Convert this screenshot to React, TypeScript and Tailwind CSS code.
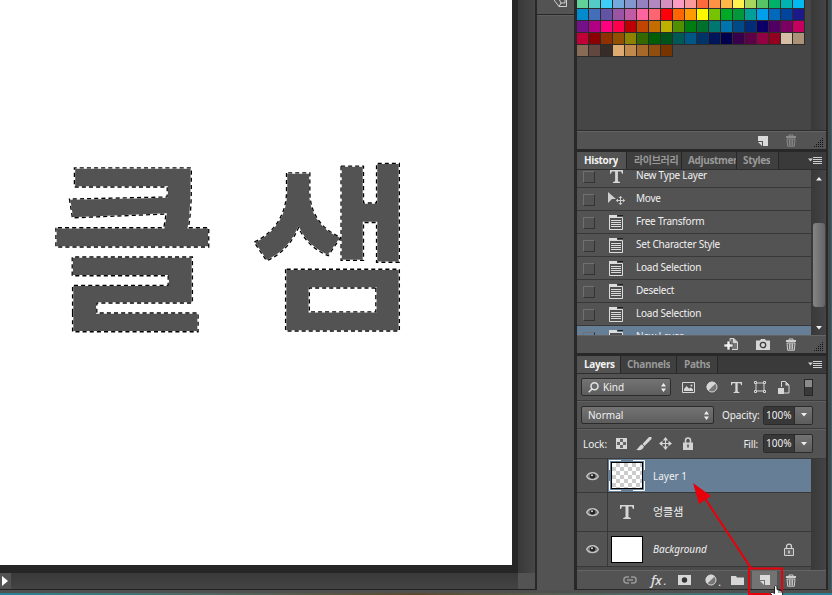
import type { ReactNode } from "react";

const SWATCHES: string[][] = [
  ["#63cf99", "#55cbc7", "#3dcdf5", "#73a9dd", "#8496cf", "#9481c0", "#b388c1", "#d38fbe", "#fc9bc4", "#fb9a9d", "#ff6a3d", "#ff9245", "#ffb648", "#fff24e", "#a8d65c", "#57c364", "#00b268", "#00b3b1", "#00baf1"],
  ["#008bcf", "#436fba", "#6353a5", "#9955a4", "#c25ba5", "#ff649f", "#ff6571", "#ff0008", "#ff6500", "#ff9b00", "#fff900", "#77c300", "#00aa28", "#00983b", "#009f98", "#009fec", "#0069bb", "#00449d", "#1c1a8b"],
  ["#731189", "#b00084", "#ff0081", "#ff004c", "#bd0005", "#c14500", "#c36d00", "#beb000", "#4f8f00", "#007d10", "#00712b", "#007671", "#0075ad", "#004a88", "#002c78", "#0b0068", "#500065", "#7b0061", "#c5005f"],
  ["#c00037", "#8b0000", "#903000", "#925000", "#8e8300", "#346900", "#005f06", "#00541a", "#005954", "#005785", "#003368", "#00165a", "#00004d", "#38004b", "#5c0048", "#930044", "#930020", "#d7bfa5", "#ac9278"],
  ["#876b57", "#624740", "#382c29", "#dfab70", "#c1894c", "#a7692a", "#8f4e10", "#763500"],
];

function NewPageIcon() {
  return (
    <svg width="12" height="12" viewBox="0 0 12 12">
      <path d="M1 1H11V11H6V6H1Z" fill="#dadada" />
      <path d="M1 7H5V11Z" fill="#dadada" />
    </svg>
  );
}

function TrashIcon({ color = "#cfcfcf" }: { color?: string }) {
  return (
    <svg width="12" height="13" viewBox="0 0 12 13" fill="none" stroke={color}>
      <path d="M4 2V1H8V2M1 3.500H11M1 2.500H11" />
      <path d="M2 5H10L9.300 12.200H2.700ZM4.400 5.500V11.500M6 5.500V11.500M7.600 5.500V11.500" />
    </svg>
  );
}

function Grip() {
  const dots: ReactNode[] = [];
  for (let r = 0; r < 5; r++) for (let c = 4 - r; c < 5; c++) dots.push(<rect key={`${r}-${c}`} x={c * 2} y={r * 2} width="1" height="1" fill="#111" />);
  return <svg width="10" height="10">{dots}</svg>;
}

function MenuIcon() {
  return (
    <svg width="14" height="9" viewBox="0 0 14 9">
      <path d="M0 2.500H5L2.500 5.500Z" fill="#cfcfcf" />
      <path d="M5 1.500H14M5 3.500H14M5 5.500H14M5 7.500H14" stroke="#cfcfcf" />
    </svg>
  );
}

function StateIcon() {
  return (
    <svg width="16" height="16" viewBox="0 0 16 16">
      <path d="M1 1H9V4H1Z" fill="#dcdcdc" />
      <path d="M9.500 1.500H15" stroke="#1f1f1f" />
      <path d="M1.500 3.500H14.500V15.500H1.500Z" fill="#505050" stroke="#dcdcdc" />
      <path d="M3 6.500H13M3 8.500H13M3 10.500H13M3 12.500H13" stroke="#dcdcdc" />
    </svg>
  );
}

function MoveIcon() {
  return (
    <svg width="18" height="16" viewBox="0 0 18 16">
      <path d="M1 1L9 8H5L1 12Z" fill="#cfcfcf" />
      <path d="M13.500 5.500V13.500M9.500 9.500H17.500" stroke="#cfcfcf" />
      <path d="M11.500 7L13.500 5L15.500 7ZM11.500 12L13.500 14L15.500 12ZM11 7.500L9 9.500L11 11.500ZM16 7.500L18 9.500L16 11.500Z" fill="#cfcfcf" />
    </svg>
  );
}

function TypeIcon({ size }: { size: number }) {
  return (
    <svg width={size} height={size} viewBox="0 0 14 14">
      <path d="M0 0H14V4H13L12 1.600H8.500V12L10.800 13V14H3.200V13L5.500 12V1.600H2L1 4H0Z" fill="#d6d6d6" />
    </svg>
  );
}

function HalfCircle() {
  return (
    <svg width="12" height="12" viewBox="0 0 12 12">
      <circle cx="6" cy="6" r="5" fill="#777" stroke="#d6d6d6" />
      <path d="M2.200 9.800A5.300 5.300 0 0 1 9.800 2.200Z" fill="#d6d6d6" />
    </svg>
  );
}

function UpDown() {
  return (
    <svg width="5" height="9" viewBox="0 0 5 9">
      <path d="M0 3.500L2.500 0L5 3.500ZM0 5.500L2.500 9L5 5.500Z" fill="#eee" />
    </svg>
  );
}

function Eye() {
  return (
    <svg width="13" height="10" viewBox="0 0 13 10">
      <path d="M.7 5.300C3 .5 10 .5 12.300 5.300C10 9.500 3 9.500 .7 5.300Z" fill="#707070" stroke="#c4c4c4" strokeWidth="1.400" />
      <circle cx="6.500" cy="5" r="2.600" fill="#222" />
      <circle cx="6" cy="4.300" r="1" fill="#ddd" />
    </svg>
  );
}

function Lock() {
  return (
    <svg width="10" height="13" viewBox="0 0 10 13">
      <path d="M2.500 6V3.500C2.500 .3 7.500 .3 7.500 3.500V6" fill="none" stroke="#d2d2d2" strokeWidth="1.500" />
      <path d="M0 5.500H10V13H0Z" fill="#d2d2d2" />
      <path d="M4.300 7.500H5.700V10.500H4.300Z" fill="#444" />
    </svg>
  );
}

function OutlineLock() {
  return (
    <svg width="10" height="13" viewBox="0 0 10 13" fill="none" stroke="#d2d2d2">
      <path d="M2.500 6V3.500C2.500 .3 7.500 .3 7.500 3.500V6" strokeWidth="1.300" />
      <path d="M.5 5.500H9.500V12.500H.5Z" fill="#666" />
      <path d="M5 7.500V10.500" strokeWidth="1.600" />
    </svg>
  );
}

function Checker({ w, h, s, a, b }: { w: number; h: number; s: number; a: string; b: string }) {
  const cells: ReactNode[] = [];
  for (let y = 0; y * s < h; y++) for (let x = 0; x * s < w; x++) if ((x + y) % 2 === 1) cells.push(<rect key={`${x}-${y}`} x={x * s} y={y * s} width={s} height={s} fill={b} />);
  return (
    <svg width={w} height={h}>
      <rect width={w} height={h} fill={a} />
      {cells}
    </svg>
  );
}

function Tab({ label, active, width, pad = "pl-[7px]" }: { label: string; active?: boolean; width: string; pad?: string }) {
  return (
    <div className={`${width} ${pad} flex h-full shrink-0 border-r border-[#282828] ${active ? "bg-[#535353] text-[#f2f2f2]" : "bg-[#3f3f3f] text-[#999]"}`}>
      <span className="min-w-0 overflow-hidden font-['Open_Sans','Noto_Sans_CJK_KR',sans-serif] leading-[16px] font-bold tracking-[-0.35px] whitespace-nowrap">{label}</span>
    </div>
  );
}

function TabBar({ children }: { children: ReactNode }) {
  return (
    <div className="flex h-[18px] items-center border-b border-[#2d2d2d] bg-[#3a3a3a]">
      {children}
      <div className="mr-1 ml-auto"><MenuIcon /></div>
    </div>
  );
}

function HistoryRow({ label, icon }: { label: string; icon: ReactNode }) {
  return (
    <div className="flex h-[23px] shrink-0 items-center border-b border-[#383838] pl-[6px]">
      <div className="mt-[2px] h-3 w-3 border border-[#707070] border-r-[#333] border-b-[#333]" />
      <div className="ml-[9px] flex w-[24px] justify-center">{icon}</div>
      <span className="-mt-[2px] ml-[8px] tracking-[-0.22px]">{label}</span>
    </div>
  );
}

function Percent() {
  return (
    <div className="flex h-[19px] w-[50px] overflow-hidden rounded-[2px] border border-[#2b2b2b]">
      <div className="w-[30px] bg-[#383838] pl-[2px] leading-[17px]">100%</div>
      <div className="flex flex-1 items-center justify-center border-l border-[#2b2b2b] bg-linear-to-b from-[#737373] to-[#5d5d5d]">
        <svg width="6" height="4"><path d="M0 0H6L3 3.500Z" fill="#eee" /></svg>
      </div>
    </div>
  );
}

function Select({ width, children }: { width: string; children: ReactNode }) {
  return (
    <div className={`${width} flex h-[18px] items-center rounded-[2px] border border-[#2b2b2b] bg-linear-to-b from-[#747474] to-[#5d5d5d] pr-[4px] pl-[6px]`}>
      {children}
      <div className="ml-auto"><UpDown /></div>
    </div>
  );
}

function LayerRow({ height, selected, thumb, children, lock }: { height: string; selected?: boolean; thumb: ReactNode; children: ReactNode; lock?: boolean }) {
  return (
    <div className={`${height} flex shrink-0 border-b border-[#383838]`}>
      <div className="flex w-[31px] items-center justify-center border-r border-[#383838]"><Eye /></div>
      <div className={`flex flex-1 items-center ${selected ? "bg-[#667f96]" : ""}`}>
        <div className="flex w-[38px] justify-center">{thumb}</div>
        <span className="ml-[7px]">{children}</span>
        {lock && <div className="mr-[17px] ml-auto"><OutlineLock /></div>}
      </div>
    </div>
  );
}

function SelectedLetter({ children, transform }: { children: string; transform: string }) {
  return (
    <g transform={transform} fontFamily="'Noto Sans CJK KR', sans-serif" fontSize="180" fontWeight="700">
      <text fill="#535353" stroke="#fff" strokeWidth="1.400">{children}</text>
      <text fill="none" stroke="#000" strokeWidth="1.300" strokeDasharray="4 3">{children}</text>
    </g>
  );
}

function Workspace() {
  return (
    <div className="flex w-[535px] flex-col">
      <div className="flex h-[573px]">
        <div className="h-full w-[518px] border-r-[6px] border-b-[8px] border-[#262626] bg-white">
          <svg width="512" height="565">
            <SelectedLetter transform="translate(48 316.5) scale(1.02 1.031)">클</SelectedLetter>
            <SelectedLetter transform="translate(249 315.8) scale(1.007 1.012)">샘</SelectedLetter>
          </svg>
        </div>
        <div className="flex-1 bg-linear-to-r from-[#393939] to-[#474747]" />
      </div>
      <div className="flex h-4 items-center bg-linear-to-b from-[#393939] to-[#444]">
        <div className="flex h-full w-[11px] items-center bg-[#535353] pl-[2px]">
          <svg width="6" height="10"><path d="M0 0L6 5L0 10Z" fill="#fff" /></svg>
        </div>
        <div className="ml-auto h-full w-[17px] bg-[#535353]" />
      </div>
      <div className="h-[1px] bg-[#222]" />
    </div>
  );
}

function SwatchPanel() {
  return (
    <>
      <div className="flex h-[131px] border-b border-[#2d2d2d]">
        <div className="w-[234px] bg-[#464646]">
          {SWATCHES.map((row, i) => (
            <div key={i} className={`flex ${i === 0 ? "h-[9px]" : "h-3"}`}>
              {row.map((c) => (
                <div key={c} className="h-full w-3 border-r border-b border-[#2c2c2c]" style={{ backgroundColor: c }} />
              ))}
            </div>
          ))}
        </div>
        <div className="flex-1 bg-linear-to-r from-[#393939] to-[#444]" />
      </div>
      <div className="flex h-[18px] items-center border-t border-[#646464]">
        <div className="ml-[180px]"><NewPageIcon /></div>
        <div className="ml-[16px]"><TrashIcon color="#8b8b8b" /></div>
        <div className="mt-[4px] mr-[2px] ml-auto"><Grip /></div>
      </div>
    </>
  );
}

function HistoryPanel() {
  return (
    <>
      <TabBar>
        <Tab label="History" active width="w-[50px]" />
        <Tab label="라이브러리" width="w-[55px]" />
        <Tab label="Adjustments" width="w-[55px]" pad="pl-[6px]" />
        <Tab label="Styles" width="w-[42px]" pad="pl-[6px]" />
      </TabBar>
      <div className="flex h-[165px]">
        <div className="flex w-[234px] flex-col overflow-hidden">
          <div className="-mt-[5px]" />
          <HistoryRow label="New Type Layer" icon={<TypeIcon size={13} />} />
          <HistoryRow label="Move" icon={<MoveIcon />} />
          <HistoryRow label="Free Transform" icon={<StateIcon />} />
          <HistoryRow label="Set Character Style" icon={<StateIcon />} />
          <HistoryRow label="Load Selection" icon={<StateIcon />} />
          <HistoryRow label="Deselect" icon={<StateIcon />} />
          <HistoryRow label="Load Selection" icon={<StateIcon />} />
          <div className="bg-[#667f96]"><HistoryRow label="New Layer" icon={<StateIcon />} /></div>
        </div>
        <div className="flex flex-1 flex-col items-center bg-linear-to-r from-[#393939] to-[#444] pt-[7px] pb-[5px]">
          <svg width="6" height="4"><path d="M0 3.500L3 0L6 3.500Z" fill="#eee" /></svg>
          <div className="mt-[42px] h-[84px] w-3 rounded-[3px] bg-linear-to-r from-[#858585] to-[#646464]" />
          <svg className="mt-auto" width="6" height="4"><path d="M0 0H6L3 3.500Z" fill="#eee" /></svg>
        </div>
      </div>
      <div className="flex h-[18px] items-center border-t border-[#646464]">
        <svg className="ml-[147px]" width="15" height="13" viewBox="0 0 15 13">
          <path d="M6 3V.5H10L13.500 4V11.500H8" fill="#777" stroke="#d6d6d6" />
          <path d="M9.500 .5V4.500H13.500" stroke="#d6d6d6" fill="#d6d6d6" />
          <path d="M3 3H6V6H9V9H6V12H3V9H0V6H3Z" fill="#eee" stroke="#444" strokeWidth=".6" />
        </svg>
        <svg className="ml-[17px]" width="14" height="11" viewBox="0 0 14 11">
          <path d="M0 1.500H4L5 0H9L10 1.500H14V11H0Z" fill="#d6d6d6" />
          <circle cx="7" cy="6" r="2.700" fill="#d6d6d6" stroke="#3d3d3d" strokeWidth="1.300" />
        </svg>
        <div className="ml-[15px]"><TrashIcon /></div>
        <div className="mt-[4px] mr-[2px] ml-auto"><Grip /></div>
      </div>
    </>
  );
}

function LayersPanel() {
  return (
    <>
      <TabBar>
        <Tab label="Layers" active width="w-[44px]" />
        <Tab label="Channels" width="w-[56px]" pad="pl-[6px]" />
        <Tab label="Paths" width="w-[41px]" />
      </TabBar>
      <div className="flex h-[27px] items-center border-b border-[#3b3b3b] pl-1">
        <Select width="w-[90px]">
          <svg width="11" height="11" viewBox="0 0 11 11" fill="none" stroke="#e5e5e5" strokeWidth="1.500">
            <circle cx="6.500" cy="4.300" r="3.500" />
            <path d="M4 7L.7 10.300" />
          </svg>
          <span className="ml-[4px]">Kind</span>
        </Select>
        <svg className="ml-[11px]" width="13" height="11" viewBox="0 0 13 11">
          <path d="M.5 .5H12.500V10.500H.5Z" fill="none" stroke="#d6d6d6" />
          <path d="M2 9V7L4.500 4L7 6.500L9 5.500L11 7.500V9Z" fill="#d6d6d6" />
          <circle cx="9.500" cy="3.500" r="1" fill="#d6d6d6" />
        </svg>
        <div className="ml-[11px]"><HalfCircle /></div>
        <div className="ml-[13px]"><TypeIcon size={11} /></div>
        <svg className="ml-[12px]" width="12" height="12" viewBox="0 0 12 12" fill="#535353" stroke="#d6d6d6">
          <path d="M2 2H10V10H2Z" />
          <path d="M.5 .5H2.500V2.500H.5ZM9.500 .5H11.500V2.500H9.500ZM.5 9.500H2.500V11.500H.5ZM9.500 9.500H11.500V11.500H9.500Z" />
        </svg>
        <svg className="ml-[12px]" width="12" height="13" viewBox="0 0 12 13">
          <path d="M3.500 6V.5H7.500L11 4V12H6" fill="none" stroke="#d6d6d6" />
          <path d="M7.500 .5V4.500H11M0 7H6V13H0Z" fill="#d6d6d6" />
        </svg>
        <div className="ml-[14px] h-[17px] w-[9px] shrink-0 border border-[#262626] bg-linear-to-b from-[#8b8b8b] from-45% to-[#393939] to-50%" />
      </div>
      <div className="flex h-[28px] items-center border-t border-b border-t-[#606060] border-b-[#3b3b3b] pl-1">
        <Select width="w-[133px]">Normal</Select>
        <span className="ml-[8px] w-[41px] tracking-[-0.1px]">Opacity:</span>
        <Percent />
      </div>
      <div className="flex h-[30px] items-center border-t border-b border-t-[#606060] border-b-[#3b3b3b] pb-px pl-[6px]">
        <span className="w-[33px]">Lock:</span>
        <div className="border border-[#d6d6d6]"><Checker w={9} h={9} s={3} a="#d6d6d6" b="#666" /></div>
        <svg className="ml-[9px]" width="16" height="14" viewBox="0 0 16 14" fill="#d6d6d6">
          <path d="M15.500 0L13 0L6.500 7L8.500 9L15.500 2ZM6 7.500L8 9.500C7 13 3 14 0 12.500C3 12 3 8 6 7.500Z" />
        </svg>
        <svg className="ml-[7px]" width="13" height="13" viewBox="0 0 13 13">
          <path d="M6.500 1V12M1 6.500H12" stroke="#d6d6d6" strokeWidth="1.200" />
          <path d="M3.800 3.500L6.500 0L9.200 3.500ZM3.800 9.500L6.500 13L9.200 9.500ZM3.500 3.800L0 6.500L3.500 9.200ZM9.500 3.800L13 6.500L9.500 9.200Z" fill="#d6d6d6" />
        </svg>
        <div className="ml-[11px]"><Lock /></div>
        <span className="mr-[5px] ml-auto tracking-[-0.2px]">Fill:</span>
        <div className="mr-[13px]"><Percent /></div>
      </div>
      <div className="flex h-[111px]">
        <div className="flex w-[234px] flex-col border-b-[3px] border-[#4a4a4a]">
          <LayerRow height="h-[34px]" selected thumb={
            <div className="relative border border-black">
              <Checker w={30} h={25} s={4} a="#fff" b="#ccc" />
              <svg className="absolute -top-[3px] -left-[3px]" width="36" height="31" fill="none" stroke="#fff">
                <path d="M12 .5H.5V10M24 .5H35.500V10M.5 21V30.500H12M24 30.500H35.500V21" />
              </svg>
            </div>
          }>Layer 1</LayerRow>
          <LayerRow height="h-[39px]" thumb={<TypeIcon size={14} />}><span className="text-[11px]">엉클샘</span></LayerRow>
          <LayerRow height="h-[35px]" lock thumb={<div className="h-[27px] w-8 border border-black bg-white" />}><i>Background</i></LayerRow>
        </div>
        <div className="flex-1 bg-linear-to-r from-[#393939] to-[#444]" />
      </div>
      <div className="flex h-[19px] items-center border-t border-[#646464]">
        <svg className="ml-[46px]" width="14" height="8" viewBox="0 0 14 8" fill="none" stroke="#999" strokeWidth="1.500">
          <path d="M6 1H3.500C0 1 0 7 3.500 7H6M8 1H10.500C14 1 14 7 10.500 7H8M4 4H10" />
        </svg>
        <span className="ml-[14px] w-[18px] text-[13px] leading-[16px] font-medium whitespace-nowrap text-[#e2e2e2] italic">fx<span className="ml-[2px] text-[10px]">.</span></span>
        <svg className="ml-[9px]" width="13" height="10"><path d="M0 0H13V10H0Z" fill="#d6d6d6" /><circle cx="6.500" cy="5" r="2.700" fill="#333" /></svg>
        <div className="ml-[14px]"><HalfCircle /></div>
        <span className="mt-1 w-[5px] text-center">.</span>
        <svg className="ml-[9px]" width="13" height="10"><path d="M0 1H5L6 2.500H13V10H0Z" fill="#d6d6d6" /></svg>
        <div className="ml-[8px] flex h-full w-[25px] items-center justify-center bg-[#737373]"><NewPageIcon /></div>
        <div className="ml-[8px]"><TrashIcon /></div>
      </div>
    </>
  );
}

export default function App() {
  return (
    <div className="relative flex h-[595px] w-[832px] flex-col overflow-hidden bg-[#535353] font-['Noto_Sans','Noto_Sans_CJK_KR',sans-serif] text-[10px] leading-[14px] text-[#f0f0f0]">
      <div className="flex h-[590px]">
        <Workspace />
        <div className="flex w-[42px] flex-col border-r-[3px] border-l-2 border-[#282828]">
          <div className="flex h-[15px] border-b border-[#282828] pl-[17px]">
            <svg width="14" height="8" viewBox="0 0 14 8" fill="none" stroke="#d0d0d0">
              <path d="M0 0L5 6.500H12.500V0M5.500 0L7 3H11V0M5 6.500L7 3" />
            </svg>
          </div>
          <div className="flex-1 border-t border-[#5d5d5d]" />
        </div>
        <div className="flex w-[251px] flex-col border-r-2 border-b border-[#282828]">
          <SwatchPanel />
          <div className="h-[3px] bg-[#282828]" />
          <HistoryPanel />
          <div className="h-[3px] bg-[#282828]" />
          <LayersPanel />
        </div>
        <div className="w-1 border-r border-[#286b7b] bg-[#484848]" />
      </div>
      <div className="h-[3px] bg-[#505050]" />
      <div className="h-[2px] bg-linear-to-r from-[#278395] via-[#5c4b2d] to-[#278395]" />
      <svg className="absolute inset-0" width="832" height="595">
        <path d="M751 568L704 497" stroke="#e9000b" strokeWidth="2" />
        <path d="M693 483L711 496L699 504Z" fill="#e9000b" />
        <path d="M749 568.500H782V594H749Z" fill="none" stroke="#e9000b" strokeWidth="2" />
        <path d="M773 596L770.500 593.500L772 592L774.500 593.500V586.500Q775.500 584.500 777 586.500V589.500L782 591L783 596Z" fill="#fff" stroke="#222" />
        <path d="M779 590V593M781 591V593" stroke="#222" strokeWidth=".7" />
      </svg>
    </div>
  );
}
